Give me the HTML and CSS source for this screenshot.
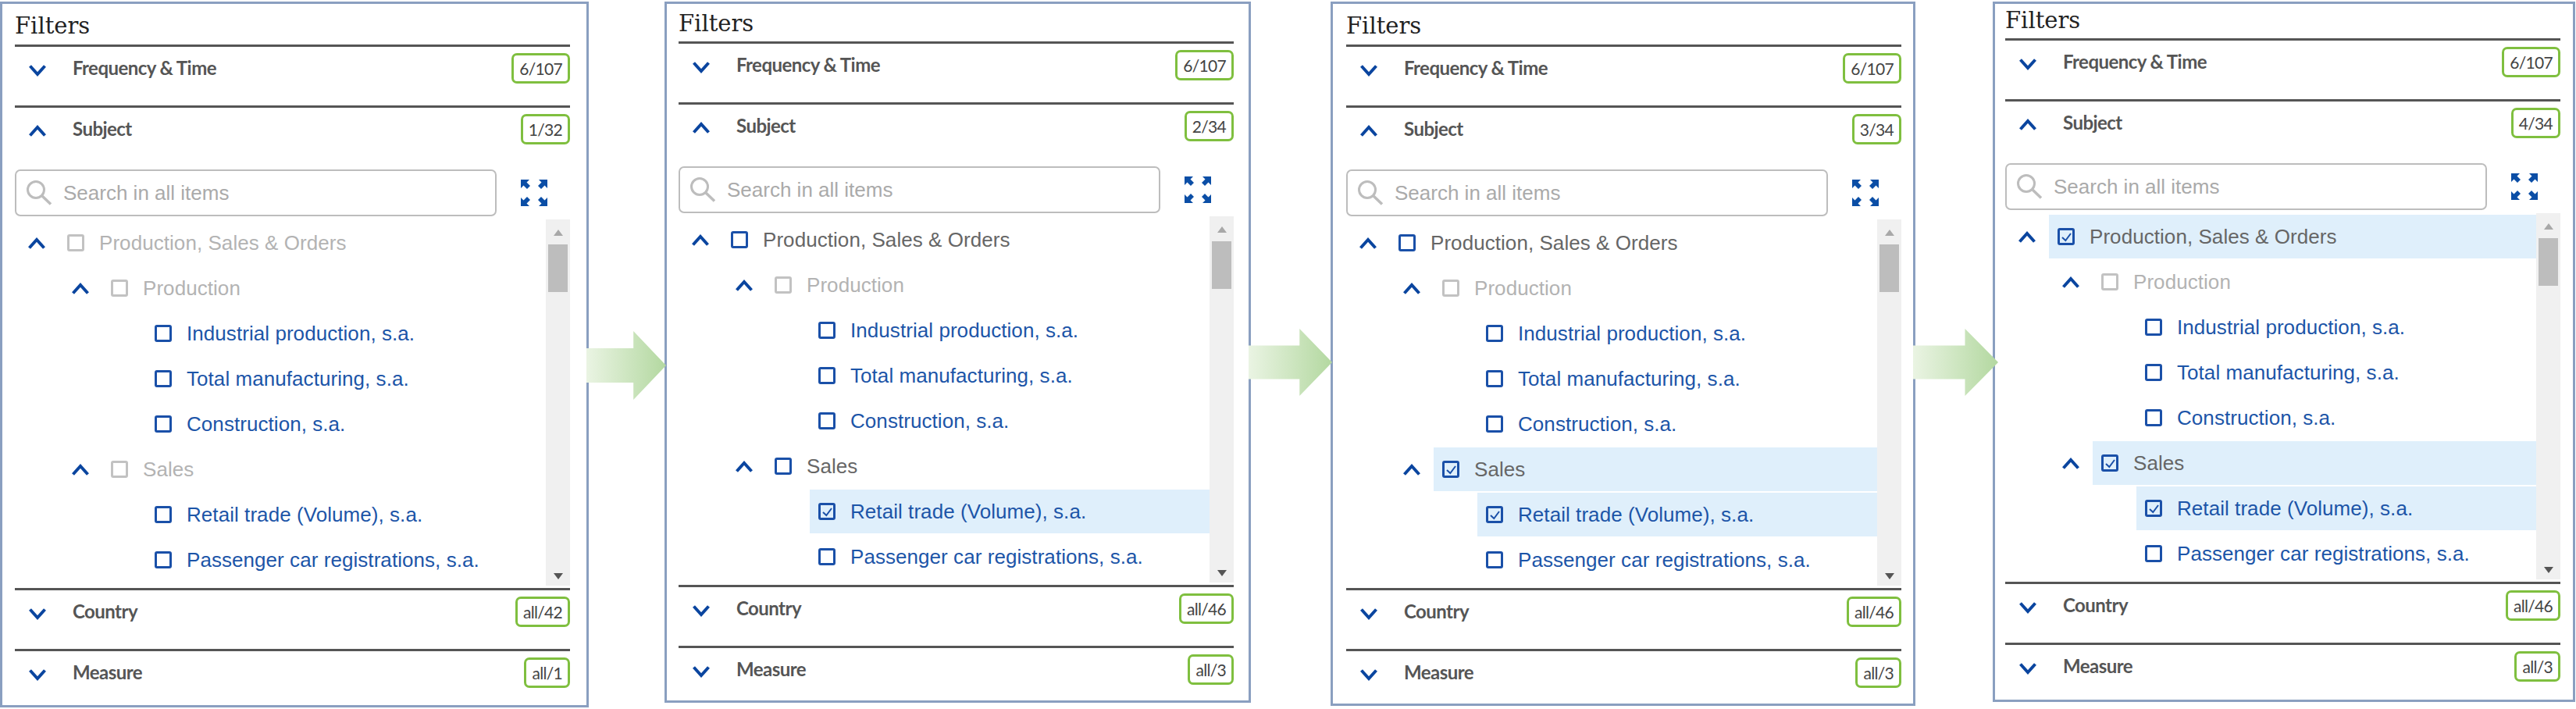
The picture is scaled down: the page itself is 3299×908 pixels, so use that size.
FILE: index.html
```html
<!DOCTYPE html>
<html lang="en">
<head>
<meta charset="utf-8">
<title>Filters</title>
<link rel="stylesheet" href="styles.css">
</head>
<body>
<svg class="sprite" aria-hidden="true">
  <symbol id="down" viewBox="0 0 24 16"><path d="M2.5 2.5 12 13 21.500 2.500" fill="none" stroke="#0a459f" stroke-width="4"/></symbol>
  <symbol id="up" viewBox="0 0 24 16"><path d="M2.500 13.500 12 3 21.500 13.500" fill="none" stroke="#0a459f" stroke-width="4"/></symbol>
  <symbol id="tick" viewBox="0 0 16 16"><path d="M3 9 7.300 13 14 4" fill="none" stroke="#1a50a8" stroke-width="2"/></symbol>
  <symbol id="lens" viewBox="0 0 34 32"><circle cx="13" cy="12" r="10.500" fill="none" stroke="#bdbdbd" stroke-width="3"/><path d="M20.500 19.500 32 30.500" fill="none" stroke="#bdbdbd" stroke-width="3.500"/></symbol>
  <symbol id="expand" viewBox="0 0 34 34">
    <g fill="#0b4ea6">
      <path d="M0 0H11L7.500 3.500 12 8 8 12 3.500 7.500 0 11Z"/>
      <path d="M34 0H23L26.500 3.500 22 8 26 12 30.500 7.500 34 11Z"/>
      <path d="M0 34H11L7.500 30.500 12 26 8 22 3.500 26.500 0 23Z"/>
      <path d="M34 34H23L26.500 30.500 22 26 26 22 30.500 26.500 34 23Z"/>
    </g>
  </symbol>
</svg>

<main class="board">

  <section class="panel p1">
    <h2 class="title">Filters</h2>
    <div class="sec"><div class="head"><svg class="chev"><use href="#down"/></svg><span class="name">Frequency &amp; Time</span><span class="badge">6/107</span></div></div>
    <div class="sec">
      <div class="head"><svg class="chev"><use href="#up"/></svg><span class="name">Subject</span><span class="badge">1/32</span></div>
      <div class="tools">
        <div class="search"><svg class="lens"><use href="#lens"/></svg><span class="hint">Search in all items</span></div>
        <svg class="expand"><use href="#expand"/></svg>
      </div>
      <div class="list">
        <div class="rows">
          <div class="row"><svg class="chev-sm"><use href="#up"/></svg><div class="cell muted"><span class="box"></span><span>Production, Sales &amp; Orders</span></div></div>
          <div class="row l1"><svg class="chev-sm"><use href="#up"/></svg><div class="cell muted"><span class="box"></span><span>Production</span></div></div>
          <div class="row l2"><span class="slot"></span><div class="cell leaf"><span class="box"></span><span>Industrial production, s.a.</span></div></div>
          <div class="row l2"><span class="slot"></span><div class="cell leaf"><span class="box"></span><span>Total manufacturing, s.a.</span></div></div>
          <div class="row l2"><span class="slot"></span><div class="cell leaf"><span class="box"></span><span>Construction, s.a.</span></div></div>
          <div class="row l1"><svg class="chev-sm"><use href="#up"/></svg><div class="cell muted"><span class="box"></span><span>Sales</span></div></div>
          <div class="row l2"><span class="slot"></span><div class="cell leaf"><span class="box"></span><span>Retail trade (Volume), s.a.</span></div></div>
          <div class="row l2"><span class="slot"></span><div class="cell leaf"><span class="box"></span><span>Passenger car registrations, s.a.</span></div></div>
        </div>
        <div class="scroll"><span class="arrow-up"></span><span class="thumb"></span><span class="arrow-down"></span></div>
      </div>
    </div>
    <div class="sec"><div class="head"><svg class="chev"><use href="#down"/></svg><span class="name">Country</span><span class="badge">all/42</span></div></div>
    <div class="sec"><div class="head"><svg class="chev"><use href="#down"/></svg><span class="name">Measure</span><span class="badge">all/1</span></div></div>
  </section>

  <section class="panel p2">
    <h2 class="title">Filters</h2>
    <div class="sec"><div class="head"><svg class="chev"><use href="#down"/></svg><span class="name">Frequency &amp; Time</span><span class="badge">6/107</span></div></div>
    <div class="sec">
      <div class="head"><svg class="chev"><use href="#up"/></svg><span class="name">Subject</span><span class="badge">2/34</span></div>
      <div class="tools">
        <div class="search"><svg class="lens"><use href="#lens"/></svg><span class="hint">Search in all items</span></div>
        <svg class="expand"><use href="#expand"/></svg>
      </div>
      <div class="list">
        <div class="rows">
          <div class="row"><svg class="chev-sm"><use href="#up"/></svg><div class="cell active"><span class="box"></span><span>Production, Sales &amp; Orders</span></div></div>
          <div class="row l1"><svg class="chev-sm"><use href="#up"/></svg><div class="cell muted"><span class="box"></span><span>Production</span></div></div>
          <div class="row l2"><span class="slot"></span><div class="cell leaf"><span class="box"></span><span>Industrial production, s.a.</span></div></div>
          <div class="row l2"><span class="slot"></span><div class="cell leaf"><span class="box"></span><span>Total manufacturing, s.a.</span></div></div>
          <div class="row l2"><span class="slot"></span><div class="cell leaf"><span class="box"></span><span>Construction, s.a.</span></div></div>
          <div class="row l1"><svg class="chev-sm"><use href="#up"/></svg><div class="cell active"><span class="box"></span><span>Sales</span></div></div>
          <div class="row l2"><span class="slot"></span><div class="cell leaf on"><span class="box"><svg class="tick"><use href="#tick"/></svg></span><span>Retail trade (Volume), s.a.</span></div></div>
          <div class="row l2"><span class="slot"></span><div class="cell leaf"><span class="box"></span><span>Passenger car registrations, s.a.</span></div></div>
        </div>
        <div class="scroll"><span class="arrow-up"></span><span class="thumb"></span><span class="arrow-down"></span></div>
      </div>
    </div>
    <div class="sec"><div class="head"><svg class="chev"><use href="#down"/></svg><span class="name">Country</span><span class="badge">all/46</span></div></div>
    <div class="sec"><div class="head"><svg class="chev"><use href="#down"/></svg><span class="name">Measure</span><span class="badge">all/3</span></div></div>
  </section>

  <section class="panel p3">
    <h2 class="title">Filters</h2>
    <div class="sec"><div class="head"><svg class="chev"><use href="#down"/></svg><span class="name">Frequency &amp; Time</span><span class="badge">6/107</span></div></div>
    <div class="sec">
      <div class="head"><svg class="chev"><use href="#up"/></svg><span class="name">Subject</span><span class="badge">3/34</span></div>
      <div class="tools">
        <div class="search"><svg class="lens"><use href="#lens"/></svg><span class="hint">Search in all items</span></div>
        <svg class="expand"><use href="#expand"/></svg>
      </div>
      <div class="list">
        <div class="rows">
          <div class="row"><svg class="chev-sm"><use href="#up"/></svg><div class="cell active"><span class="box"></span><span>Production, Sales &amp; Orders</span></div></div>
          <div class="row l1"><svg class="chev-sm"><use href="#up"/></svg><div class="cell muted"><span class="box"></span><span>Production</span></div></div>
          <div class="row l2"><span class="slot"></span><div class="cell leaf"><span class="box"></span><span>Industrial production, s.a.</span></div></div>
          <div class="row l2"><span class="slot"></span><div class="cell leaf"><span class="box"></span><span>Total manufacturing, s.a.</span></div></div>
          <div class="row l2"><span class="slot"></span><div class="cell leaf"><span class="box"></span><span>Construction, s.a.</span></div></div>
          <div class="row l1"><svg class="chev-sm"><use href="#up"/></svg><div class="cell active on"><span class="box"><svg class="tick"><use href="#tick"/></svg></span><span>Sales</span></div></div>
          <div class="row l2"><span class="slot"></span><div class="cell leaf on"><span class="box"><svg class="tick"><use href="#tick"/></svg></span><span>Retail trade (Volume), s.a.</span></div></div>
          <div class="row l2"><span class="slot"></span><div class="cell leaf"><span class="box"></span><span>Passenger car registrations, s.a.</span></div></div>
        </div>
        <div class="scroll"><span class="arrow-up"></span><span class="thumb"></span><span class="arrow-down"></span></div>
      </div>
    </div>
    <div class="sec"><div class="head"><svg class="chev"><use href="#down"/></svg><span class="name">Country</span><span class="badge">all/46</span></div></div>
    <div class="sec"><div class="head"><svg class="chev"><use href="#down"/></svg><span class="name">Measure</span><span class="badge">all/3</span></div></div>
  </section>

  <section class="panel p4">
    <h2 class="title">Filters</h2>
    <div class="sec"><div class="head"><svg class="chev"><use href="#down"/></svg><span class="name">Frequency &amp; Time</span><span class="badge">6/107</span></div></div>
    <div class="sec">
      <div class="head"><svg class="chev"><use href="#up"/></svg><span class="name">Subject</span><span class="badge">4/34</span></div>
      <div class="tools">
        <div class="search"><svg class="lens"><use href="#lens"/></svg><span class="hint">Search in all items</span></div>
        <svg class="expand"><use href="#expand"/></svg>
      </div>
      <div class="list">
        <div class="rows">
          <div class="row"><svg class="chev-sm"><use href="#up"/></svg><div class="cell active on"><span class="box"><svg class="tick"><use href="#tick"/></svg></span><span>Production, Sales &amp; Orders</span></div></div>
          <div class="row l1"><svg class="chev-sm"><use href="#up"/></svg><div class="cell muted"><span class="box"></span><span>Production</span></div></div>
          <div class="row l2"><span class="slot"></span><div class="cell leaf"><span class="box"></span><span>Industrial production, s.a.</span></div></div>
          <div class="row l2"><span class="slot"></span><div class="cell leaf"><span class="box"></span><span>Total manufacturing, s.a.</span></div></div>
          <div class="row l2"><span class="slot"></span><div class="cell leaf"><span class="box"></span><span>Construction, s.a.</span></div></div>
          <div class="row l1"><svg class="chev-sm"><use href="#up"/></svg><div class="cell active on"><span class="box"><svg class="tick"><use href="#tick"/></svg></span><span>Sales</span></div></div>
          <div class="row l2"><span class="slot"></span><div class="cell leaf on"><span class="box"><svg class="tick"><use href="#tick"/></svg></span><span>Retail trade (Volume), s.a.</span></div></div>
          <div class="row l2"><span class="slot"></span><div class="cell leaf"><span class="box"></span><span>Passenger car registrations, s.a.</span></div></div>
        </div>
        <div class="scroll"><span class="arrow-up"></span><span class="thumb"></span><span class="arrow-down"></span></div>
      </div>
    </div>
    <div class="sec"><div class="head"><svg class="chev"><use href="#down"/></svg><span class="name">Country</span><span class="badge">all/46</span></div></div>
    <div class="sec"><div class="head"><svg class="chev"><use href="#down"/></svg><span class="name">Measure</span><span class="badge">all/3</span></div></div>
  </section>

  <div class="step s1"></div>
  <div class="step s2"></div>
  <div class="step s3"></div>
</main>
</body>
</html>
```

FILE: styles.css
```css
* { box-sizing: border-box; }
html, body { margin: 0; background: #fff; }
body { width: 3299px; height: 908px; overflow: hidden; font-family: "Liberation Sans", Arial, sans-serif; }
.sprite { display: none; }

.board { position: relative; display: flex; align-items: flex-start; width: 3299px; height: 908px; padding-top: 2px; }

.panel { flex: none; border: 3px solid #8a9fc0; background: #fff; }
.p1 { width: 754px; height: 904px; padding: 8px 21px 0 16px; }
.p2 { width: 751px; height: 898px; margin-left: 97px; padding: 5px 19px 0 15px; }
.p3 { width: 749px; height: 902px; margin-left: 102px; padding: 8px 15px 0 17px; }
.p4 { width: 746px; height: 897px; margin-left: 99px; padding: 1px 16px 0 13px; }

.title { margin: 0; height: 44px; font: 400 29px/40px "DejaVu Serif", serif; color: #222; }
.p2 .title { height: 43px; }
.p4 .title { height: 43px; }

.sec { border-top: 3px solid #555; }
.head { display: flex; align-items: flex-start; height: 75px; padding-top: 8px; }
.chev { flex: none; width: 24px; height: 16px; margin: 14px 33px 0 17px; }
.name { flex: 1; font: 700 24px/38px Lato, sans-serif; color: #555; letter-spacing: -.55px; }
.badge { flex: none; height: 39px; padding: 0 7px; border: 3px solid #7fbf3f; border-radius: 7px; font: 400 21px/33px Lato, sans-serif; color: #444; letter-spacing: -.7px; }

.tools { display: flex; align-items: center; height: 60px; margin-top: 4px; }
.search { display: flex; align-items: center; width: 617px; height: 60px; padding-left: 12px; border: 2px solid #bdbdbd; border-radius: 7px; }
.lens { flex: none; width: 34px; height: 32px; }
.hint { margin-left: 14px; font-size: 26px; color: #aaa; }
.expand { flex: none; width: 34px; height: 34px; margin-left: 31px; }

.list { display: flex; height: 469px; margin: 4px 0 3px; }
.rows { flex: 1; padding-top: 2px; }
.row { display: flex; height: 58px; padding-bottom: 2px; }
.l1 { padding-left: 56px; }
.l2 { padding-left: 112px; }
.chev-sm { flex: none; width: 24px; height: 16px; margin: 21px 16px 0 16px; }
.slot { flex: none; width: 56px; }
.cell { flex: 1; display: flex; align-items: center; gap: 19px; padding-left: 11px; font-size: 26px; letter-spacing: .06px; }
.cell .box { flex: none; display: flex; align-items: center; justify-content: center; width: 22px; height: 22px; border: 3px solid #1a50a8; border-radius: 3px; }
.muted { color: #b3b3b3; }
.muted .box { border-color: #c2c2c2; }
.active { color: #666; }
.leaf { color: #1c55a8; }
.on { background: #dfeffb; }
.tick { flex: none; width: 16px; height: 16px; }

.scroll { flex: none; display: flex; flex-direction: column; align-items: center; width: 31px; background: #f0f0f0; }
.arrow-up { width: 0; height: 0; margin-top: 13px; border: 6.5px solid transparent; border-top: 0; border-bottom: 8px solid #a8a8a8; }
.thumb { width: 25px; height: 61px; margin-top: 11px; background: #bdbdbd; }
.arrow-down { width: 0; height: 0; margin-top: auto; margin-bottom: 8px; border: 6.5px solid transparent; border-bottom: 0; border-top: 8px solid #555; }

.step { position: absolute; height: 88px; background: linear-gradient(90deg, #eaf4e3, #b3d8a0); }
.s1 { left: 751px; top: 424px; width: 102px; clip-path: polygon(0 25%, 59% 25%, 59% 0, 100% 50%, 59% 100%, 59% 75%, 0 75%); }
.s2 { left: 1599px; top: 421px; width: 107px; height: 86px; clip-path: polygon(0 25%, 61% 25%, 61% 0, 100% 50%, 61% 100%, 61% 75%, 0 75%); }
.s3 { left: 2450px; top: 421px; width: 109px; height: 86px; clip-path: polygon(0 25%, 61% 25%, 61% 0, 100% 50%, 61% 100%, 61% 75%, 0 75%); }
```
